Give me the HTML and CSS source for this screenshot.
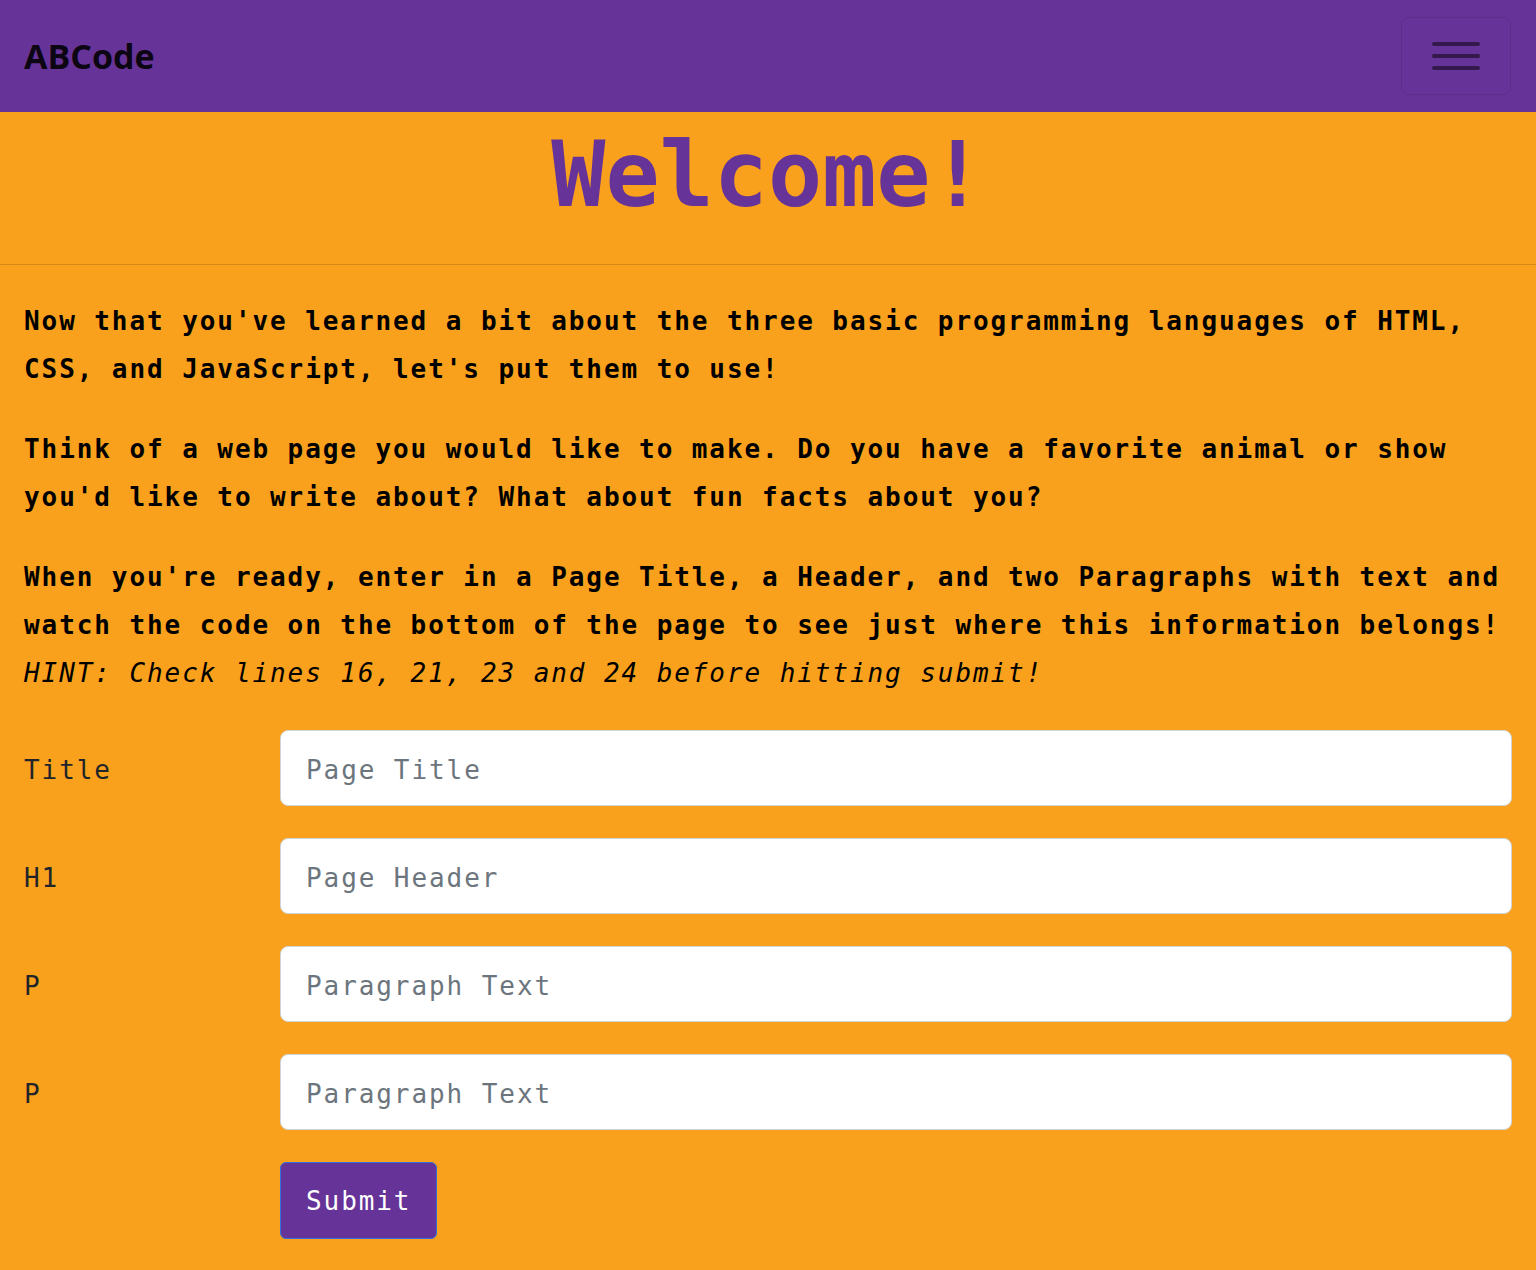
FILE: index.html
```html
<!DOCTYPE html>
<html lang="en">
<head>
<meta charset="utf-8">
<title>ABCode</title>
<link rel="stylesheet" href="styles.css">
</head>
<body>
<nav class="navbar">
  <span class="brand">ABCode</span>
  <button class="toggler" type="button" aria-label="Toggle navigation">
    <svg class="toggler-icon" width="50" height="36" viewBox="0 0 50 36" aria-hidden="true">
      <path d="M3 6H47M3 18H47M3 30H47" stroke="rgba(0,0,0,0.5)" stroke-width="4" stroke-linecap="round" fill="none"/>
    </svg>
  </button>
</nav>
<header class="hero">
  <h1 class="hero-title">Welcome!</h1>
</header>
<main class="content">
  <p class="lead">Now that you've learned a bit about the three basic programming languages of HTML, CSS, and JavaScript, let's put them to use!</p>
  <p class="lead">Think of a web page you would like to make. Do you have a favorite animal or show you'd like to write about? What about fun facts about you?</p>
  <p class="lead">When you're ready, enter in a Page Title, a Header, and two Paragraphs with text and watch the code on the bottom of the page to see just where this information belongs!<br><span class="hint">HINT: Check lines 16, 21, 23 and 24 before hitting submit!</span></p>
  <form class="form">
    <div class="form-row">
      <label class="form-label" for="title">Title</label>
      <input class="form-input" id="title" type="text" placeholder="Page Title">
    </div>
    <div class="form-row">
      <label class="form-label" for="h1">H1</label>
      <input class="form-input" id="h1" type="text" placeholder="Page Header">
    </div>
    <div class="form-row">
      <label class="form-label" for="p1">P</label>
      <input class="form-input" id="p1" type="text" placeholder="Paragraph Text">
    </div>
    <div class="form-row">
      <label class="form-label" for="p2">P</label>
      <input class="form-input" id="p2" type="text" placeholder="Paragraph Text">
    </div>
    <div class="form-row">
      <span></span>
      <div class="actions"><button class="submit" type="button">Submit</button></div>
    </div>
  </form>
</main>
</body>
</html>
```
FILE: styles.css
```css
* { box-sizing: border-box; }

html, body {
  margin: 0;
  padding: 0;
  background: #f9a11c;
}

body {
  font-family: "DejaVu Sans Mono", "Liberation Mono", monospace;
  color: #000;
}

.navbar {
  height: 112px;
  background: #663399;
  display: flex;
  align-items: center;
  justify-content: space-between;
  padding: 0 25px 0 24px;
}

.brand {
  font-family: "Open Sans", "Noto Sans", sans-serif;
  font-weight: 700;
  font-size: 34px;
  color: rgba(0, 0, 0, 0.9);
  line-height: 1;
}

.toggler {
  width: 110px;
  height: 78px;
  background: transparent;
  border: 1px solid rgba(0, 0, 0, 0.1);
  border-radius: 8px;
  display: flex;
  align-items: center;
  justify-content: center;
  padding: 0;
}

.toggler-icon { display: block; }

.hero {
  padding: 9px 0 35px;
  border-bottom: 1px solid rgba(0, 0, 0, 0.15);
  text-align: center;
}

.hero-title {
  margin: 0;
  font-family: "DejaVu Sans Mono", monospace;
  font-weight: 700;
  font-size: 90px;
  line-height: 108px;
  color: #663399;
}

.content {
  padding: 32px 24px 32px;
}

.lead {
  margin: 0 0 32px;
  font-size: 26px;
  line-height: 48px;
  font-weight: 700;
  letter-spacing: 1.92px;
}

.hint {
  font-style: italic;
  font-weight: 400;
}

.form {
  margin-top: 33px;
  display: flex;
  flex-direction: column;
  gap: 32px;
}

.form-row {
  display: grid;
  grid-template-columns: 256px 1fr;
  align-items: center;
}

.form-label {
  font-size: 26px;
  letter-spacing: 1.92px;
  color: #212529;
  padding-top: 3px;
}

.form-input {
  height: 76px;
  width: 100%;
  border: 1px solid #ced4da;
  border-radius: 8px;
  background: #fff;
  padding: 3px 25px 0;
  font-family: "DejaVu Sans Mono", monospace;
  font-size: 26px;
  letter-spacing: 1.92px;
  color: #212529;
}

.form-input::placeholder { color: #6c757d; opacity: 1; }

.actions { display: flex; }

.submit {
  height: 77px;
  padding: 0 25px;
  background: #663399;
  border: 1px solid #2f6fe0;
  border-radius: 6px;
  color: #fff;
  font-family: "DejaVu Sans Mono", monospace;
  font-size: 26px;
  letter-spacing: 1.92px;
}
```
